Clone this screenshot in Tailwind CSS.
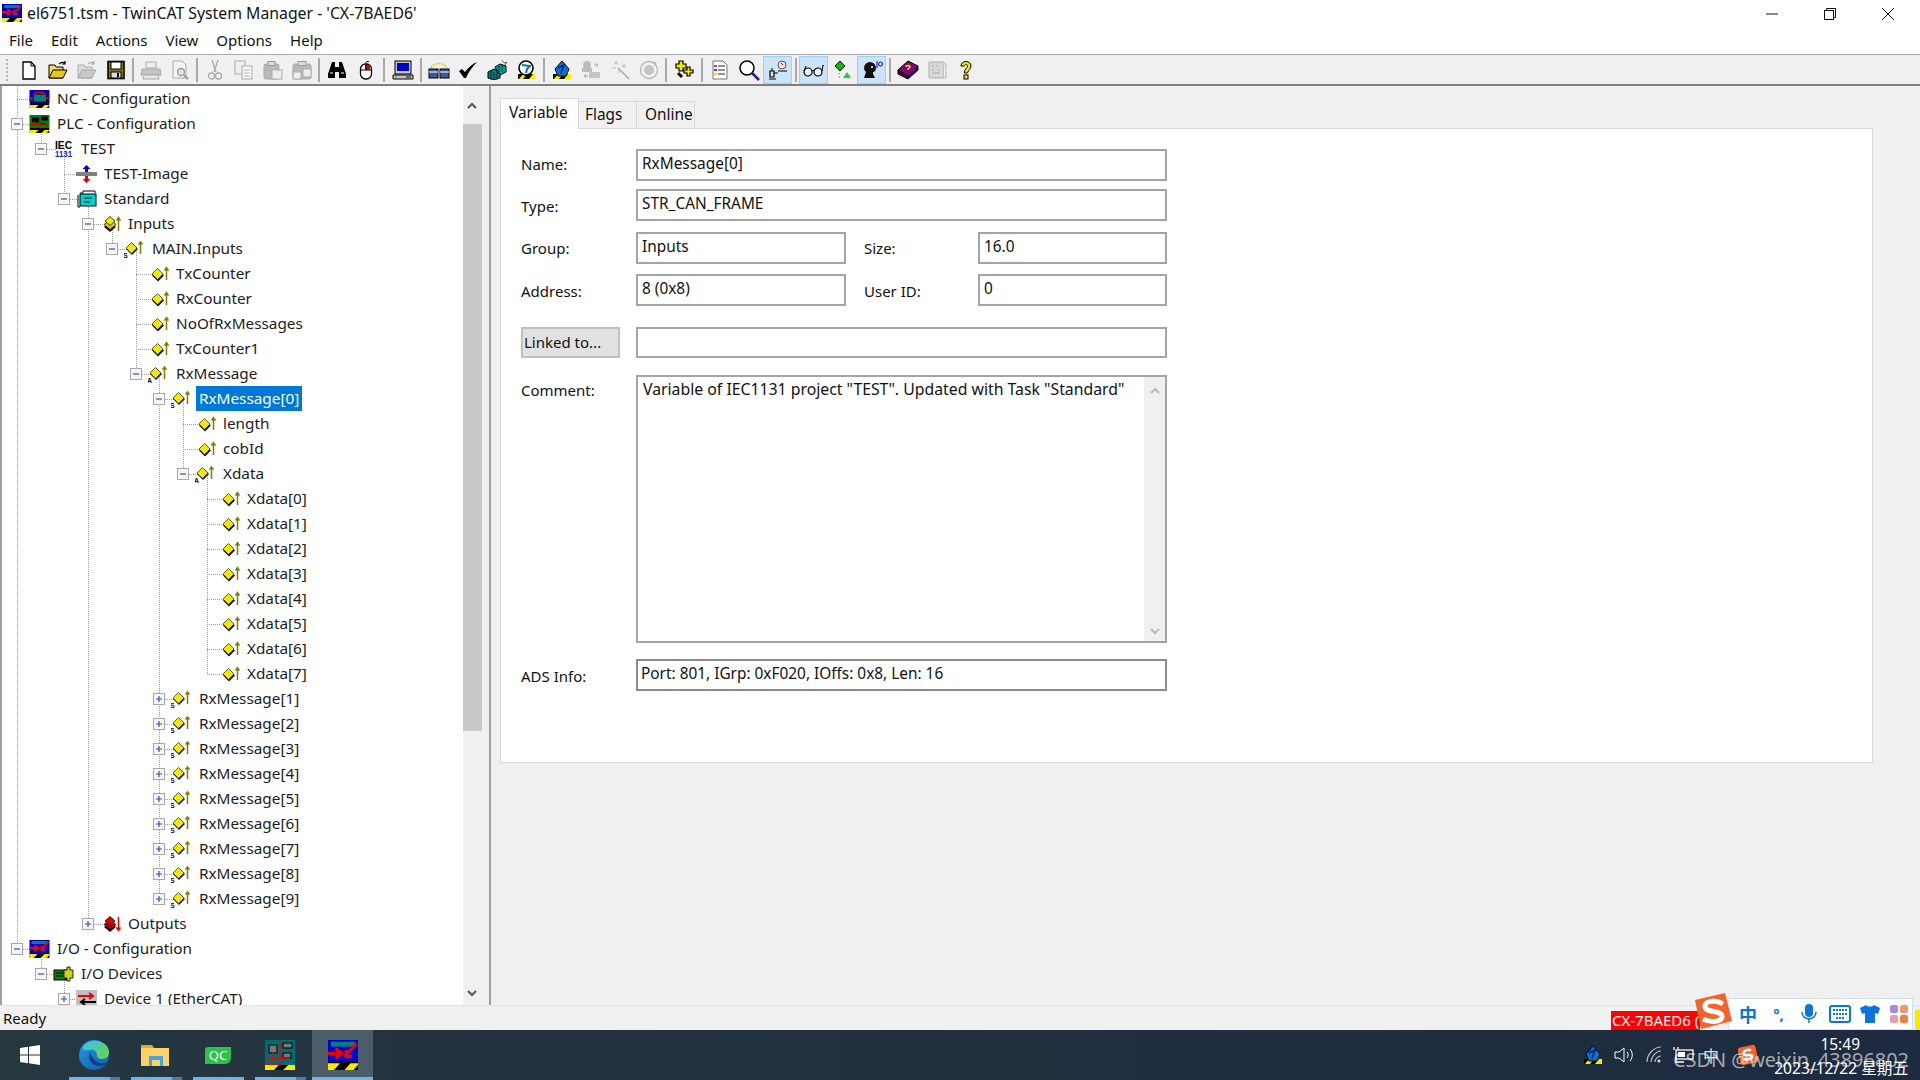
<!doctype html>
<html>
<head>
<meta charset="utf-8">
<title>TwinCAT System Manager</title>
<script src="https://cdn.jsdelivr.net/npm/@tailwindcss/browser@4"></script>
</head>
<body class="overflow-hidden">
<!-- shared icons -->
<svg class="hidden" width="0" height="0">
  <defs>
    <symbol id="minus" viewBox="0 0 12 12"><rect x=".5" y=".5" width="11" height="11" fill="#f6f6f6" stroke="#a8a8a8"/><path d="M3 6h6" stroke="#3b4fa8" stroke-width="1.2"/></symbol>
    <symbol id="plus" viewBox="0 0 12 12"><rect x=".5" y=".5" width="11" height="11" fill="#f6f6f6" stroke="#a8a8a8"/><path d="M3 6h6M6 3v6" stroke="#3b4fa8" stroke-width="1.2"/></symbol>
    <symbol id="var" viewBox="0 0 21 18"><path d="M4 10.500l6-6 6 6-6 6z" fill="#111"/><path d="M4 9l5.500-5.500L15 9l-5.500 5.500z" fill="#f4e800" stroke="#222" stroke-width=".7"/><path d="M18.500 15V3M16.500 5.500l2-3 2 3" fill="none" stroke="#808000" stroke-width="1.500"/></symbol>
    <symbol id="var-a" viewBox="0 0 21 18"><path d="M2 9l6-6 6 6-6 6z" fill="#111"/><path d="M2 8l5.500-5.500L13 8l-5.500 5.500z" fill="#f4e800" stroke="#222" stroke-width=".7"/><path d="M16.500 14V2M14.500 4.500l2-2.500 2 2.500" fill="none" stroke="#808000" stroke-width="1.500"/><text x="-1" y="18" font-size="7" font-weight="700" font-family="Liberation Sans" fill="#111">A</text></symbol>
    <symbol id="var-s" viewBox="0 0 21 18"><path d="M2 9l6-6 6 6-6 6z" fill="#111"/><path d="M2 8l5.500-5.500L13 8l-5.500 5.500z" fill="#f4e800" stroke="#222" stroke-width=".7"/><path d="M16.500 14V2M14.500 4.500l2-2.500 2 2.500" fill="none" stroke="#808000" stroke-width="1.500"/><text x="-1" y="18" font-size="7" font-weight="700" font-family="Liberation Sans" fill="#111">S</text></symbol>
    <symbol id="var-stack" viewBox="0 0 21 18"><g transform="translate(3 0)"><path d="M1 12l6-5 6 5-6 5z" fill="#111"/><path d="M1 9.500l6-5 6 5-6 5z" fill="#d8c800" stroke="#111" stroke-width=".8"/><path d="M2 6l5-4.500L12 6l-5 4.500z" fill="#f4e800" stroke="#111" stroke-width=".8"/><path d="M15.500 16V3M13.500 5.500l2-3 2 3" fill="none" stroke="#808000" stroke-width="1.500"/></g></symbol>
    <symbol id="out-stack" viewBox="0 0 21 18"><g transform="translate(3 0)"><path d="M1 12l6-5 6 5-6 5z" fill="#111"/><path d="M1 9.500l6-5 6 5-6 5z" fill="#b00000" stroke="#111" stroke-width=".8"/><path d="M2 6l5-4.500L12 6l-5 4.500z" fill="#e80000" stroke="#111" stroke-width=".8"/><path d="M15.500 2v13M13.500 12.500l2 3 2-3" fill="none" stroke="#e80000" stroke-width="1.500"/></g></symbol>
    <symbol id="strip" viewBox="0 0 20 5"><rect width="20" height="5" fill="#000"/><path d="M0 5V2h9l-3 3zM12 5l3-3h5l-3 3z" fill="#f7ea00"/></symbol>
    <symbol id="twincat-io" viewBox="0 0 20 18"><rect width="20" height="13" fill="#0000c8"/><rect x="2" y="1" width="16" height="3" fill="#008080"/><path d="M0 8h9M5 5l4 3-4 3" fill="none" stroke="#f00000" stroke-width="2"/><path d="M19 2l-8 8M12 6v4h4" fill="none" stroke="#f00000" stroke-width="2"/><rect y="13" width="20" height="5" fill="#000"/><path d="M0 18v-4h8l-4 4zM11 18l4-4h5v1l-3 3z" fill="#f7ea00"/></symbol>
    <symbol id="globe" viewBox="0 0 20 20"><rect x="1" y="14" width="18" height="5" fill="#000"/><path d="M2 19l4-5h5l-4 5zM12 19l4-5h3v5z" fill="#f7ea00"/><path d="M3 9l7-8 7 8-3 7H6z" fill="#0078d0" stroke="#000"/><path d="M6 8l6-3-2 5-1 4" fill="none" stroke="#101080" stroke-width="1.500"/></symbol>
    <symbol id="globe2" viewBox="0 0 20 20"><rect x="2" y="14" width="17" height="5" fill="#000"/><path d="M3 19l4-5h4l-4 5zM13 19l4-5h2v5z" fill="#f7ea00"/><circle cx="10" cy="8" r="7" fill="#fff" stroke="#000" stroke-width="1.600"/><path d="M6 5l8 1-3 3-1 4" fill="none" stroke="#008080" stroke-width="2"/></symbol>
  </defs>
</svg>

<div class="relative flex flex-col w-[1920px] h-[1080px] bg-white text-[#111] overflow-hidden font-['Noto_Sans','Open_Sans',sans-serif]">

  <!-- title bar -->
  <div class="flex items-center h-[28px] shrink-0 bg-white">
    <svg class="w-[20px] h-[20px] ml-[2px] mt-[-3px]" viewBox="0 0 20 20"><use href="#twincat-io"/></svg>
    <span class="ml-[5px] text-[15.8px] mt-[-1px] whitespace-nowrap">el6751.tsm - TwinCAT System Manager - 'CX-7BAED6'</span>
    <div class="ml-auto mr-[3px] flex items-center">
      <span class="flex justify-center w-[58px]"><svg class="w-[14px] h-[14px]" viewBox="0 0 14 14"><path d="M1 7h12" stroke="#111"/></svg></span>
      <span class="flex justify-center w-[58px]"><svg class="w-[14px] h-[14px]" viewBox="0 0 14 14"><path d="M3.500 3V1.500h9v9H11" fill="none" stroke="#111"/><rect x="1.500" y="3.500" width="9" height="9" fill="none" stroke="#111"/></svg></span>
      <span class="flex justify-center w-[58px]"><svg class="w-[14px] h-[14px]" viewBox="0 0 14 14"><path d="M1 1l12 12M13 1L1 13" stroke="#111"/></svg></span>
    </div>
  </div>

  <!-- menu bar -->
  <div class="flex items-center gap-[18px] h-[26px] shrink-0 pl-[9px] pb-[1px] text-[15px] bg-white">
    <span>File</span><span>Edit</span><span>Actions</span><span>View</span><span>Options</span><span>Help</span>
  </div>

  <!-- toolbar -->
  <div class="flex items-center h-[30px] shrink-0 bg-[#f0f0f0] border-t border-[#a8a8a8]">
    <div class="w-[14px] flex justify-center"><span class="h-[22px] border-l-2 border-dotted border-[#b5b5b5]"></span></div>
    <div class="w-[29px] h-[28px] flex items-center justify-center"><svg class="w-[20px] h-[20px]" viewBox="0 0 20 20"><path d="M4 2h8l4 4v13H4z" fill="#fff" stroke="#000" stroke-width="1.300"/><path d="M12 2v4h4" fill="none" stroke="#000"/></svg></div>
    <div class="w-[29px] h-[28px] flex items-center justify-center"><svg class="w-[20px] h-[20px]" viewBox="0 0 20 20"><path d="M1 5h6l1 2h7v11H1z" fill="#f0e060" stroke="#000"/><path d="M1 18l4-8h14l-4 8z" fill="#e8c820" stroke="#000"/><path d="M11 4c2-2 4-2 6-1M17 1v3h-3" fill="none" stroke="#000" stroke-width="1.200"/></svg></div>
    <div class="w-[29px] h-[28px] flex items-center justify-center"><svg class="w-[20px] h-[20px]" viewBox="0 0 20 20"><path d="M1 5h6l1 2h7v11H1z" fill="#dcdcdc" stroke="#aaa"/><path d="M1 18l4-8h14l-4 8z" fill="#c8c8c8" stroke="#aaa"/><path d="M11 4c2-2 4-2 6-1M17 1v3h-3" fill="none" stroke="#aaa" stroke-width="1.200"/></svg></div>
    <div class="w-[29px] h-[28px] flex items-center justify-center"><svg class="w-[20px] h-[20px]" viewBox="0 0 20 20"><rect x="2" y="1.500" width="16" height="17" fill="#807800" stroke="#000" stroke-width="1.600"/><rect x="5" y="2" width="10" height="7" fill="#fff" stroke="#000"/><rect x="5" y="12" width="10" height="6" fill="#ddd" stroke="#000"/><rect x="11" y="13" width="2" height="4" fill="#000"/></svg></div>
    <div class="w-[6px] flex justify-center"><span class="w-[2px] h-[24px] bg-[#a8a8a8]"></span></div>
    <div class="w-[29px] h-[28px] flex items-center justify-center"><svg class="w-[22px] h-[20px]" viewBox="0 0 22 20"><path d="M6 2h10v6H6z" fill="#eee" stroke="#aaa"/><path d="M2 9h18l1 6H1z" fill="#c4c4c4" stroke="#aaa"/><path d="M4 15h14l1 4H3z" fill="#e8e8e8" stroke="#aaa"/></svg></div>
    <div class="w-[29px] h-[28px] flex items-center justify-center"><svg class="w-[20px] h-[20px]" viewBox="0 0 20 20"><path d="M3 1h9l4 4v13H3z" fill="#f4f4f4" stroke="#aaa"/><circle cx="11" cy="12" r="3.500" fill="#e4e4e4" stroke="#999" stroke-width="1.300"/><path d="M14 15l4 4" stroke="#999" stroke-width="2"/></svg></div>
    <div class="w-[6px] flex justify-center"><span class="w-[2px] h-[24px] bg-[#a8a8a8]"></span></div>
    <div class="w-[29px] h-[28px] flex items-center justify-center"><svg class="w-[16px] h-[22px]" viewBox="0 0 16 22"><path d="M5 1l4 12M11 1L7 13" stroke="#aaa" stroke-width="1.300"/><circle cx="4.500" cy="17" r="3" fill="none" stroke="#aaa" stroke-width="1.300"/><circle cx="11.500" cy="17" r="3" fill="none" stroke="#aaa" stroke-width="1.300"/></svg></div>
    <div class="w-[29px] h-[28px] flex items-center justify-center"><svg class="w-[20px] h-[20px]" viewBox="0 0 20 20"><rect x="1" y="1" width="10" height="13" fill="#eee" stroke="#aaa"/><rect x="8" y="6" width="10" height="13" fill="#f6f6f6" stroke="#aaa"/><path d="M10 10h6M10 13h6M10 16h6" stroke="#bbb"/></svg></div>
    <div class="w-[29px] h-[28px] flex items-center justify-center"><svg class="w-[20px] h-[20px]" viewBox="0 0 20 20"><rect x="1" y="4" width="15" height="15" rx="2" fill="#b8b8b8" stroke="#aaa"/><rect x="5" y="1.500" width="7" height="4" fill="#ddd" stroke="#999"/><rect x="9" y="10" width="10" height="9" fill="#eee" stroke="#aaa"/></svg></div>
    <div class="w-[29px] h-[28px] flex items-center justify-center"><svg class="w-[20px] h-[20px]" viewBox="0 0 20 20"><rect x="1" y="4" width="18" height="15" rx="2" fill="#b8b8b8" stroke="#aaa"/><rect x="6" y="1.500" width="8" height="4" fill="#ddd" stroke="#999"/><rect x="1" y="12" width="8" height="7" fill="#eee" stroke="#aaa"/><rect x="11" y="9" width="8" height="8" fill="#eee" stroke="#aaa"/></svg></div>
    <div class="w-[6px] flex justify-center"><span class="w-[2px] h-[24px] bg-[#a8a8a8]"></span></div>
    <div class="w-[29px] h-[28px] flex items-center justify-center"><svg class="w-[20px] h-[18px]" viewBox="0 0 20 18"><path d="M5 1h3v5h4V1h3l4 12v4h-7v-6H8v6H1v-4z" fill="#000"/><path d="M3 12h3M14 12h3" stroke="#fff"/></svg></div>
    <div class="w-[29px] h-[28px] flex items-center justify-center"><svg class="w-[14px] h-[20px]" viewBox="0 0 14 20"><path d="M7 3c0-2 3-2 3-1" fill="none" stroke="#000"/><rect x="1.500" y="4" width="11" height="15" rx="5" fill="#fff" stroke="#000" stroke-width="1.300"/><rect x="6" y="5" width="5" height="5" fill="#e00000"/><path d="M2 10h10M7 4v6" stroke="#000"/></svg></div>
    <div class="w-[8px] flex justify-center"><span class="w-[2px] h-[24px] bg-[#a8a8a8]"></span></div>
    <div class="w-[29px] h-[28px] flex items-center justify-center"><svg class="w-[22px] h-[20px]" viewBox="0 0 22 20"><rect x="3" y="1" width="16" height="13" fill="#c8c8c8" stroke="#000"/><rect x="5" y="3" width="12" height="8" fill="#0000d0"/><path d="M1 15h20v4H1z" fill="#c8c8c8" stroke="#000"/><path d="M14 17h5" stroke="#000"/><rect x="3" y="16.500" width="2" height="1" fill="#00c000"/></svg></div>
    <div class="w-[7px] flex justify-center"><span class="w-[2px] h-[24px] bg-[#a8a8a8]"></span></div>
    <div class="w-[29px] h-[28px] flex items-center justify-center"><svg class="w-[22px] h-[20px]" viewBox="0 0 22 20"><path d="M3 8c4-6 12-6 16 0" fill="none" stroke="#e0c800" stroke-width="1.500" stroke-dasharray="2 1"/><rect x="1" y="9" width="9" height="9" fill="#3c5a98" stroke="#000"/><rect x="12" y="9" width="9" height="9" fill="#3c5a98" stroke="#000"/><path d="M1 12h9M12 12h9" stroke="#c8c8c8" stroke-width="1.500"/></svg></div>
    <div class="w-[29px] h-[28px] flex items-center justify-center"><svg class="w-[20px] h-[20px]" viewBox="0 0 20 20"><path d="M1 11l3-2 3 3C10 8 14 4 19 2c-4 4-8 9-11 16H6z" fill="#000"/></svg></div>
    <div class="w-[29px] h-[28px] flex items-center justify-center"><svg class="w-[20px] h-[20px]" viewBox="0 0 20 20"><path d="M1 12l6-3 6 3v6l-6 2-6-2z" fill="#008080" stroke="#000"/><path d="M8 7l5-3 6 2v6l-6 3z" fill="#00a0a0" stroke="#000"/><path d="M4 11v7M7 12v7M10 11v7M12 6v7M15 5v7" stroke="#000" stroke-width=".7"/><path d="M15 0l2 3 3-1-2 3" fill="#f0e000" stroke="#000" stroke-width=".5"/></svg></div>
    <div class="w-[29px] h-[28px] flex items-center justify-center"><svg class="w-[20px] h-[20px]" viewBox="0 0 20 20"><use href="#globe2"/></svg></div>
    <div class="w-[7px] flex justify-center"><span class="w-[2px] h-[24px] bg-[#a8a8a8]"></span></div>
    <div class="w-[29px] h-[28px] flex items-center justify-center"><svg class="w-[20px] h-[20px]" viewBox="0 0 20 20"><use href="#globe"/></svg></div>
    <div class="w-[29px] h-[28px] flex items-center justify-center"><svg class="w-[20px] h-[20px]" viewBox="0 0 20 20"><circle cx="6" cy="5" r="4" fill="#bbb"/><rect x="1" y="8" width="10" height="4" fill="#bbb"/><rect x="8" y="12" width="11" height="6" rx="1" fill="#c4c4c4"/><path d="M13 5h4M15 3l2 2-2 2M3 16h4M5 14l-2 2 2 2" fill="none" stroke="#aaa"/></svg></div>
    <div class="w-[29px] h-[28px] flex items-center justify-center"><svg class="w-[20px] h-[20px]" viewBox="0 0 20 20"><path d="M8 8l11 11" stroke="#aaa" stroke-width="1.600"/><path d="M6 1v4M4 3h4M2 8h4M14 4v4M12 6h4M9 10v3" stroke="#bbb"/></svg></div>
    <div class="w-[29px] h-[28px] flex items-center justify-center"><svg class="w-[20px] h-[20px]" viewBox="0 0 20 20"><circle cx="10" cy="10" r="8.500" fill="none" stroke="#bbb" stroke-width="1.400"/><circle cx="10" cy="10" r="5" fill="#c4c4c4"/><path d="M14 2l3 1-1 3" fill="none" stroke="#aaa"/></svg></div>
    <div class="w-[6px] flex justify-center"><span class="w-[2px] h-[24px] bg-[#a8a8a8]"></span></div>
    <div class="w-[29px] h-[28px] flex items-center justify-center"><svg class="w-[20px] h-[20px]" viewBox="0 0 20 20"><path d="M5 1h4v3h3v4H9v3H5V8H2V4h3z" fill="#f4e800" stroke="#000" stroke-width="1.200"/><path d="M13 7h3v3h3v3h-3v3h-3v-3h-3v-3h3z" fill="#f4e800" stroke="#000" stroke-width="1.200"/><path d="M5 12l4 4-2 2-4-4z" fill="#000"/></svg></div>
    <div class="w-[7px] flex justify-center"><span class="w-[2px] h-[24px] bg-[#a8a8a8]"></span></div>
    <div class="w-[29px] h-[28px] flex items-center justify-center"><svg class="w-[18px] h-[20px]" viewBox="0 0 18 20"><path d="M2 1h10l4 4v14H2z" fill="#fff" stroke="#777"/><path d="M3 6h3" stroke="#d00000" stroke-width="1.500"/><path d="M3 10h3" stroke="#0000d0" stroke-width="1.500"/><path d="M3 14h3" stroke="#d8c000" stroke-width="1.500"/><path d="M7 6h7M7 10h7M7 14h7" stroke="#222"/></svg></div>
    <div class="w-[29px] h-[28px] flex items-center justify-center"><svg class="w-[22px] h-[22px]" viewBox="0 0 22 22"><circle cx="9" cy="9" r="7" fill="#fff" stroke="#000" stroke-width="1.500"/><path d="M14 14l7 7" stroke="#202090" stroke-width="2.500"/></svg></div>
    <div class="w-[29px] h-[28px] flex items-center justify-center bg-[#cce4f7] border border-[#99d1ff]"><svg class="w-[22px] h-[20px]" viewBox="0 0 22 20"><circle cx="15" cy="5" r="4" fill="#e8e8e8" stroke="#555"/><path d="M14 3l2 2" stroke="#c00"/><path d="M3 11h4v6H3zM7 13h4M11 11h9" fill="none" stroke="#000" stroke-width="1.200"/><path d="M2 19h7M5 8v3" stroke="#000"/></svg></div>
    <div class="w-[7px] flex justify-center"><span class="w-[2px] h-[24px] bg-[#a8a8a8]"></span></div>
    <div class="w-[29px] h-[28px] flex items-center justify-center bg-[#cce4f7] border border-[#99d1ff]"><svg class="w-[22px] h-[16px]" viewBox="0 0 22 16"><circle cx="5" cy="10" r="4" fill="#e8f4ff" stroke="#000" stroke-width="1.200"/><circle cx="15" cy="10" r="4" fill="#e8f4ff" stroke="#000" stroke-width="1.200"/><path d="M9 9c1-1 1-1 2 0M1 9l2-5M19 9l1-6 1 1" fill="none" stroke="#000"/></svg></div>
    <div class="w-[29px] h-[28px] flex items-center justify-center"><svg class="w-[20px] h-[20px]" viewBox="0 0 20 20"><path d="M2 6l5-5 5 5-5 5z" fill="#00c000" stroke="#000"/><path d="M10 18l4-6 4 6z" fill="#20d040"/><path d="M6 13v2M6 17h2" stroke="#555" stroke-dasharray="1 1"/></svg></div>
    <div class="w-[29px] h-[28px] flex items-center justify-center bg-[#cce4f7] border border-[#99d1ff]"><svg class="w-[22px] h-[20px]" viewBox="0 0 22 20"><path d="M3 8a6 6 0 0 1 12 0c0 3-2 4-3 4v2l2 4H3l2-6C4 11 3 10 3 8z" fill="#111"/><circle cx="11" cy="7" r="1" fill="#fff"/><path d="M16 1v7" stroke="#0000e0"/><circle cx="19.500" cy="4" r="2" fill="none" stroke="#0000e0"/></svg></div>
    <div class="w-[7px] flex justify-center"><span class="w-[2px] h-[24px] bg-[#a8a8a8]"></span></div>
    <div class="w-[29px] h-[28px] flex items-center justify-center"><svg class="w-[22px] h-[20px]" viewBox="0 0 22 20"><path d="M1 10l10-9 10 5-10 10z" fill="#800080" stroke="#000"/><path d="M1 10v4l10 5 10-9V6L11 16z" fill="#400040" stroke="#000"/><path d="M9 7c0-2 4-2 4 0 0 1-2 1-2 3" fill="none" stroke="#f0e000" stroke-width="1.500"/></svg></div>
    <div class="w-[29px] h-[28px] flex items-center justify-center"><svg class="w-[20px] h-[20px]" viewBox="0 0 20 20"><rect x="2" y="2" width="15" height="16" rx="1" fill="#d8d8d8" stroke="#aaa"/><path d="M5 5l2 2M9 5l2 2M5 9l2 2M11 9l2 2M5 13h8" stroke="#aaa"/><path d="M17 4h2v14h-2" fill="#eee" stroke="#bbb"/></svg></div>
    <div class="w-[29px] h-[28px] flex items-center justify-center"><svg class="w-[14px] h-[20px]" viewBox="0 0 14 20"><path d="M2 6c0-6 10-6 10 0 0 3-3 4-3.500 7h-3C5 9 8.500 8 8.500 6c0-2-3-2-3 0z" fill="#f4e800" stroke="#000"/><rect x="5" y="15" width="4" height="4" fill="#f4e800" stroke="#000"/></svg></div>
  </div>

  <!-- main area -->
  <div class="flex flex-1 min-h-0 border-t-2 border-[#808080] bg-[#f0f0f0]">

    <!-- tree with its scrollbar -->
    <div class="flex shrink-0 w-[482px]">
      <div class="w-[2px] bg-[#a0a0a0]"></div>
      <div class="relative w-[461px] bg-white overflow-hidden text-[15.3px] text-[#1c1c1c]">
        <svg class="absolute left-0 top-0" width="461" height="930" fill="none" stroke="#9c9c9c" stroke-dasharray="1 1">
          <path d="M15.500 0V863M39.500 38V63M39.500 863V888M62.500 63V113M62.500 888V925M86.500 113V838M110.500 138V163M134.500 163V288M157.500 288V813M181.500 313V388M205.500 388V588"/>
          <path d="M15 13.500h15M15 38.500h15M39 63.500h15M62 88.500h15M62 113.500h15M86 138.500h15M110 163.500h15M134 188.500h15M134 213.500h15M134 238.500h15M134 263.500h15M134 288.500h15M157 313.500h15M181 338.500h15M181 363.500h15M181 388.500h15M205 413.500h15M205 438.500h15M205 463.500h15M205 488.500h15M205 513.500h15M205 538.500h15M205 563.500h15M205 588.500h15M157 613.500h15M157 638.500h15M157 663.500h15M157 688.500h15M157 713.500h15M157 738.500h15M157 763.500h15M157 788.500h15M157 813.500h15M86 838.500h15M15 863.500h15M39 888.500h15M62 913.500h15"/>
        </svg>
        <div class="relative">
          <div class="flex items-center h-[25px] pl-[9px]"><span class="w-[12px] shrink-0"></span><svg class="w-[21px] h-[18px] ml-[6px]" viewBox="0 0 20 18"><rect width="20" height="13" fill="#0000c8"/><rect x="4" y="4" width="13" height="8" fill="#008080" stroke="#000"/><path d="M4 5c2-4 9-4 12 0" fill="none" stroke="#e00000" stroke-width="1.500"/><path d="M0 8h4M16 8h4" stroke="#e00000" stroke-width="2"/><use href="#strip" y="13" width="20" height="5"/></svg><span class="ml-[7px]">NC - Configuration</span></div>
          <div class="flex items-center h-[25px] pl-[9px]"><svg class="w-[12px] h-[12px] shrink-0"><use href="#minus"/></svg><svg class="w-[21px] h-[18px] ml-[6px]" viewBox="0 0 20 18"><rect width="20" height="13" fill="#008000"/><path d="M3 3h6v4h-6zM12 2h6v3h-6zM9 9h8" fill="#000" stroke="#000"/><path d="M1 10h18M10 2v9M5 6v5" stroke="#e00000" stroke-width="1.300"/><use href="#strip" y="13" width="20" height="5"/></svg><span class="ml-[7px]">PLC - Configuration</span></div>
          <div class="flex items-center h-[25px] pl-[33px]"><svg class="w-[12px] h-[12px] shrink-0"><use href="#minus"/></svg><svg class="w-[21px] h-[18px] ml-[6px]" viewBox="0 0 21 18"><text x="2" y="9" font-size="10.500" font-weight="700" font-family="Liberation Sans" textLength="17" lengthAdjust="spacingAndGlyphs" fill="#000">IEC</text><text x="2" y="17" font-size="9" font-weight="700" font-family="Liberation Sans" textLength="17" lengthAdjust="spacingAndGlyphs" fill="#1020d8">1131</text></svg><span class="ml-[7px]">TEST</span></div>
          <div class="flex items-center h-[25px] pl-[56px]"><span class="w-[12px] shrink-0"></span><svg class="w-[21px] h-[18px] ml-[6px]" viewBox="0 0 21 18"><rect y="7" width="21" height="4" fill="#808080"/><path d="M10.500 0l4 4h-2.500v3h-3V4H6.500z" fill="#0000e0"/><path d="M10.500 18l4-4h-2.500v-3h-3v3H6.500z" fill="#e00000"/></svg><span class="ml-[7px]">TEST-Image</span></div>
          <div class="flex items-center h-[25px] pl-[56px]"><svg class="w-[12px] h-[12px] shrink-0"><use href="#minus"/></svg><svg class="w-[21px] h-[18px] ml-[6px]" viewBox="0 0 21 18"><path d="M4 3h3V1h12v2" fill="none" stroke="#000"/><rect x="4" y="4" width="16" height="12" fill="#00d0d0" stroke="#000"/><path d="M4 17H2V5" fill="none" stroke="#000"/><path d="M8 8h8M8 12h6" stroke="#000"/></svg><span class="ml-[7px]">Standard</span></div>
          <div class="flex items-center h-[25px] pl-[80px]"><svg class="w-[12px] h-[12px] shrink-0"><use href="#minus"/></svg><svg class="w-[21px] h-[18px] ml-[6px]"><use href="#var-stack"/></svg><span class="ml-[7px]">Inputs</span></div>
          <div class="flex items-center h-[25px] pl-[104px]"><svg class="w-[12px] h-[12px] shrink-0"><use href="#minus"/></svg><svg class="w-[21px] h-[18px] ml-[6px]"><use href="#var-s"/></svg><span class="ml-[7px]">MAIN.Inputs</span></div>
          <div class="flex items-center h-[25px] pl-[128px]"><span class="w-[12px] shrink-0"></span><svg class="w-[21px] h-[18px] ml-[6px]"><use href="#var"/></svg><span class="ml-[7px]">TxCounter</span></div>
          <div class="flex items-center h-[25px] pl-[128px]"><span class="w-[12px] shrink-0"></span><svg class="w-[21px] h-[18px] ml-[6px]"><use href="#var"/></svg><span class="ml-[7px]">RxCounter</span></div>
          <div class="flex items-center h-[25px] pl-[128px]"><span class="w-[12px] shrink-0"></span><svg class="w-[21px] h-[18px] ml-[6px]"><use href="#var"/></svg><span class="ml-[7px]">NoOfRxMessages</span></div>
          <div class="flex items-center h-[25px] pl-[128px]"><span class="w-[12px] shrink-0"></span><svg class="w-[21px] h-[18px] ml-[6px]"><use href="#var"/></svg><span class="ml-[7px]">TxCounter1</span></div>
          <div class="flex items-center h-[25px] pl-[128px]"><svg class="w-[12px] h-[12px] shrink-0"><use href="#minus"/></svg><svg class="w-[21px] h-[18px] ml-[6px]"><use href="#var-a"/></svg><span class="ml-[7px]">RxMessage</span></div>
          <div class="flex items-center h-[25px] pl-[151px]"><svg class="w-[12px] h-[12px] shrink-0"><use href="#minus"/></svg><svg class="w-[21px] h-[18px] ml-[6px]"><use href="#var-s"/></svg><span class="ml-[4px] px-[3px] h-[25px] flex items-center bg-[#0078d7] text-white">RxMessage[0]</span></div>
          <div class="flex items-center h-[25px] pl-[175px]"><span class="w-[12px] shrink-0"></span><svg class="w-[21px] h-[18px] ml-[6px]"><use href="#var"/></svg><span class="ml-[7px]">length</span></div>
          <div class="flex items-center h-[25px] pl-[175px]"><span class="w-[12px] shrink-0"></span><svg class="w-[21px] h-[18px] ml-[6px]"><use href="#var"/></svg><span class="ml-[7px]">cobId</span></div>
          <div class="flex items-center h-[25px] pl-[175px]"><svg class="w-[12px] h-[12px] shrink-0"><use href="#minus"/></svg><svg class="w-[21px] h-[18px] ml-[6px]"><use href="#var-a"/></svg><span class="ml-[7px]">Xdata</span></div>
          <div class="flex items-center h-[25px] pl-[199px]"><span class="w-[12px] shrink-0"></span><svg class="w-[21px] h-[18px] ml-[6px]"><use href="#var"/></svg><span class="ml-[7px]">Xdata[0]</span></div>
          <div class="flex items-center h-[25px] pl-[199px]"><span class="w-[12px] shrink-0"></span><svg class="w-[21px] h-[18px] ml-[6px]"><use href="#var"/></svg><span class="ml-[7px]">Xdata[1]</span></div>
          <div class="flex items-center h-[25px] pl-[199px]"><span class="w-[12px] shrink-0"></span><svg class="w-[21px] h-[18px] ml-[6px]"><use href="#var"/></svg><span class="ml-[7px]">Xdata[2]</span></div>
          <div class="flex items-center h-[25px] pl-[199px]"><span class="w-[12px] shrink-0"></span><svg class="w-[21px] h-[18px] ml-[6px]"><use href="#var"/></svg><span class="ml-[7px]">Xdata[3]</span></div>
          <div class="flex items-center h-[25px] pl-[199px]"><span class="w-[12px] shrink-0"></span><svg class="w-[21px] h-[18px] ml-[6px]"><use href="#var"/></svg><span class="ml-[7px]">Xdata[4]</span></div>
          <div class="flex items-center h-[25px] pl-[199px]"><span class="w-[12px] shrink-0"></span><svg class="w-[21px] h-[18px] ml-[6px]"><use href="#var"/></svg><span class="ml-[7px]">Xdata[5]</span></div>
          <div class="flex items-center h-[25px] pl-[199px]"><span class="w-[12px] shrink-0"></span><svg class="w-[21px] h-[18px] ml-[6px]"><use href="#var"/></svg><span class="ml-[7px]">Xdata[6]</span></div>
          <div class="flex items-center h-[25px] pl-[199px]"><span class="w-[12px] shrink-0"></span><svg class="w-[21px] h-[18px] ml-[6px]"><use href="#var"/></svg><span class="ml-[7px]">Xdata[7]</span></div>
          <div class="flex items-center h-[25px] pl-[151px]"><svg class="w-[12px] h-[12px] shrink-0"><use href="#plus"/></svg><svg class="w-[21px] h-[18px] ml-[6px]"><use href="#var-s"/></svg><span class="ml-[7px]">RxMessage[1]</span></div>
          <div class="flex items-center h-[25px] pl-[151px]"><svg class="w-[12px] h-[12px] shrink-0"><use href="#plus"/></svg><svg class="w-[21px] h-[18px] ml-[6px]"><use href="#var-s"/></svg><span class="ml-[7px]">RxMessage[2]</span></div>
          <div class="flex items-center h-[25px] pl-[151px]"><svg class="w-[12px] h-[12px] shrink-0"><use href="#plus"/></svg><svg class="w-[21px] h-[18px] ml-[6px]"><use href="#var-s"/></svg><span class="ml-[7px]">RxMessage[3]</span></div>
          <div class="flex items-center h-[25px] pl-[151px]"><svg class="w-[12px] h-[12px] shrink-0"><use href="#plus"/></svg><svg class="w-[21px] h-[18px] ml-[6px]"><use href="#var-s"/></svg><span class="ml-[7px]">RxMessage[4]</span></div>
          <div class="flex items-center h-[25px] pl-[151px]"><svg class="w-[12px] h-[12px] shrink-0"><use href="#plus"/></svg><svg class="w-[21px] h-[18px] ml-[6px]"><use href="#var-s"/></svg><span class="ml-[7px]">RxMessage[5]</span></div>
          <div class="flex items-center h-[25px] pl-[151px]"><svg class="w-[12px] h-[12px] shrink-0"><use href="#plus"/></svg><svg class="w-[21px] h-[18px] ml-[6px]"><use href="#var-s"/></svg><span class="ml-[7px]">RxMessage[6]</span></div>
          <div class="flex items-center h-[25px] pl-[151px]"><svg class="w-[12px] h-[12px] shrink-0"><use href="#plus"/></svg><svg class="w-[21px] h-[18px] ml-[6px]"><use href="#var-s"/></svg><span class="ml-[7px]">RxMessage[7]</span></div>
          <div class="flex items-center h-[25px] pl-[151px]"><svg class="w-[12px] h-[12px] shrink-0"><use href="#plus"/></svg><svg class="w-[21px] h-[18px] ml-[6px]"><use href="#var-s"/></svg><span class="ml-[7px]">RxMessage[8]</span></div>
          <div class="flex items-center h-[25px] pl-[151px]"><svg class="w-[12px] h-[12px] shrink-0"><use href="#plus"/></svg><svg class="w-[21px] h-[18px] ml-[6px]"><use href="#var-s"/></svg><span class="ml-[7px]">RxMessage[9]</span></div>
          <div class="flex items-center h-[25px] pl-[80px]"><svg class="w-[12px] h-[12px] shrink-0"><use href="#plus"/></svg><svg class="w-[21px] h-[18px] ml-[6px]"><use href="#out-stack"/></svg><span class="ml-[7px]">Outputs</span></div>
          <div class="flex items-center h-[25px] pl-[9px]"><svg class="w-[12px] h-[12px] shrink-0"><use href="#minus"/></svg><svg class="w-[21px] h-[18px] ml-[6px]"><use href="#twincat-io"/></svg><span class="ml-[7px]">I/O - Configuration</span></div>
          <div class="flex items-center h-[25px] pl-[33px]"><svg class="w-[12px] h-[12px] shrink-0"><use href="#minus"/></svg><svg class="w-[21px] h-[18px] ml-[6px]" viewBox="0 0 21 18"><rect x="1" y="5" width="13" height="10" fill="#108010" stroke="#000"/><path d="M3 8h7M3 11h7" stroke="#000"/><path d="M11 5h3V2h3v3h3v8h-3v3h-3v-3h-3z" fill="#d0d020" stroke="#000" stroke-width=".8"/></svg><span class="ml-[7px]">I/O Devices</span></div>
          <div class="flex items-center h-[25px] pl-[56px]"><svg class="w-[12px] h-[12px] shrink-0"><use href="#plus"/></svg><svg class="w-[21px] h-[18px] ml-[6px]" viewBox="0 0 21 18"><rect width="21" height="18" fill="#c0c0c0"/><path d="M2 6h14M13 3l4 3-4 3" fill="none" stroke="#f00000" stroke-width="2"/><path d="M20 12H6M9 9l-4 3 4 3" fill="none" stroke="#000" stroke-width="2"/></svg><span class="ml-[7px]">Device 1 (EtherCAT)</span></div>
        </div>
      </div>
      <div class="flex flex-col items-center w-[19px] bg-[#f0f0f0]">
        <div class="flex items-center justify-center h-[38px] shrink-0 w-full pr-[2px]"><svg class="w-[10px] h-[7px]" viewBox="0 0 10 7"><path d="M1 6l4-4 4 4" fill="none" stroke="#555" stroke-width="2"/></svg></div>
        <div class="h-[607px] shrink-0 w-full bg-[#c8c8c8]"></div>
        <div class="flex-1"></div>
        <div class="flex items-center justify-center h-[23px] shrink-0 w-full pr-[2px]"><svg class="w-[10px] h-[7px]" viewBox="0 0 10 7"><path d="M1 1l4 4 4-4" fill="none" stroke="#555" stroke-width="2"/></svg></div>
      </div>
    </div>

    <!-- splitter -->
    <div class="w-[7px] shrink-0"></div>

    <!-- properties panel -->
    <div class="flex-1 border-l-2 border-[#a0a0a0] pl-[9px] pr-[47px] pt-[12px]">
      <div class="relative flex items-end h-[30px] text-[15.4px]">
        <span class="flex items-center relative z-10 h-[31px] mb-[-1px] w-[79px] pl-[8px] pb-[3px] bg-white border border-b-0 border-[#d9d9d9]">Variable</span>
        <span class="flex items-center h-[27px] w-[58px] pl-[6px] pb-[1px] border-r border-t border-[#d9d9d9]">Flags</span>
        <span class="flex items-center h-[27px] w-[58px] pl-[8px] pb-[1px] border-r border-t border-[#d9d9d9]">Online</span>
      </div>
      <div class="h-[635px] bg-white border border-[#d9d9d9] text-[15.4px] pl-[20px]">
        <div class="flex items-center mt-[20px] h-[32px]"><span class="w-[115px] pb-[2px] text-[15px]">Name:</span><div class="flex items-center w-[531px] h-[32px] pl-[4px] pb-[3px] border-2 border-[#a4a4a4]">RxMessage[0]</div></div>
        <div class="flex items-center mt-[8px] h-[32px]"><span class="w-[115px] pt-[2px] text-[15px]">Type:</span><div class="flex items-center w-[531px] h-[32px] pl-[4px] pb-[3px] border-2 border-[#a4a4a4]">STR_CAN_FRAME</div></div>
        <div class="flex items-center mt-[11px] h-[32px]"><span class="w-[115px] text-[15px]">Group:</span><div class="flex items-center w-[210px] h-[32px] pl-[4px] pb-[3px] border-2 border-[#a4a4a4]">Inputs</div><span class="w-[132px] pl-[18px] text-[15px]">Size:</span><div class="flex items-center w-[189px] h-[32px] pl-[4px] pb-[3px] border-2 border-[#a4a4a4]">16.0</div></div>
        <div class="flex items-center mt-[10px] h-[32px]"><span class="w-[115px] pt-[2px] text-[15px]">Address:</span><div class="flex items-center w-[210px] h-[32px] pl-[4px] pb-[3px] border-2 border-[#a4a4a4]">8 (0x8)</div><span class="w-[132px] pl-[18px] pt-[2px] text-[15px]">User ID:</span><div class="flex items-center w-[189px] h-[32px] pl-[4px] pb-[3px] border-2 border-[#a4a4a4]">0</div></div>
        <div class="flex items-center mt-[21px] h-[31px]"><div class="w-[115px]"><span class="flex items-center w-[99px] h-[31px] pl-[1px] text-[15px] bg-[#e1e1e1] border-2 border-[#c0c0c0]">Linked to...</span></div><div class="w-[531px] h-[31px] border-2 border-[#a4a4a4]"></div></div>
        <div class="flex mt-[17px] h-[268px]"><span class="w-[115px] pt-[4px] text-[15px]">Comment:</span>
          <div class="flex w-[531px] h-[268px] border-2 border-[#a4a4a4]">
            <p class="flex-1 pl-[5px] pt-[1px] whitespace-nowrap text-[15.8px]">Variable of IEC1131 project "TEST". Updated with Task "Standard"</p>
            <div class="flex flex-col items-center justify-between w-[21px] bg-[#f0f0f0] pt-[10px] pb-[6px]">
              <svg class="w-[10px] h-[7px]" viewBox="0 0 10 7"><path d="M1 6l4-4 4 4" fill="none" stroke="#b8b8b8" stroke-width="2"/></svg>
              <svg class="w-[10px] h-[7px]" viewBox="0 0 10 7"><path d="M1 1l4 4 4-4" fill="none" stroke="#b8b8b8" stroke-width="2"/></svg>
            </div>
          </div>
        </div>
        <div class="flex items-center mt-[16px] h-[32px]"><span class="w-[115px] pt-[2px] text-[15px]">ADS Info:</span><div class="flex items-center w-[531px] h-[32px] pl-[3px] pb-[3px] border-2 border-[#8c8c8c]">Port: 801, IGrp: 0xF020, IOffs: 0x8, Len: 16</div></div>
      </div>
    </div>
  </div>

  <!-- status bar -->
  <div class="flex items-center h-[25px] shrink-0 bg-[#f0f0f0] border-t border-[#e4e4e4] text-[15px]">
    <span class="pl-[3px]">Ready</span>
    <span class="ml-auto mr-[220px] mt-[5px] flex items-center h-[19px] w-[89px] pl-[1px] bg-[#ff0000] text-white whitespace-nowrap overflow-hidden">CX-7BAED6 (</span>
    <span class="absolute right-0 bottom-[50px] w-[5px] h-[20px] bg-[#f7ea00]"></span>
  </div>

  <!-- taskbar -->
  <div class="flex items-center h-[50px] shrink-0 bg-gradient-to-r from-[#25373f] to-[#1d2a40] text-white">
    <div class="flex items-center justify-center w-[64px] h-[50px] pr-[4px]"><svg class="w-[20px] h-[20px]" viewBox="0 0 20 20" fill="#fff"><path d="M0 3l8-1.200V9.500H0zM9 1.700L20 0v9.500H9zM0 10.500h8v7.700l-8-1.200zM9 10.500h11V20L9 18.300z"/></svg></div>
    <div class="relative flex items-center justify-center w-[62px] h-[50px]"><svg class="w-[32px] h-[32px]" viewBox="0 0 32 32"><defs><linearGradient id="edge-a" x1="0" y1="0" x2="1" y2="1"><stop offset="0" stop-color="#1b9de2"/><stop offset="1" stop-color="#1558b0"/></linearGradient><linearGradient id="edge-b" x1="0" y1="0" x2="1" y2="1"><stop offset="0" stop-color="#35c1f1"/><stop offset="1" stop-color="#6fd53f"/></linearGradient></defs><circle cx="15" cy="16" r="15" fill="url(#edge-a)"/><path d="M3 9C7 1 20-1 27 6c4 4 4 11 0 13-4 2-10 1-9-3 0-3-3-6-7-5-4 0-6 1-8-2z" fill="url(#edge-b)"/><path d="M11 13c-3 5 1 14 9 14 3 0 6-1 8-4-5 3-13 2-17-10z" fill="#0b3f8a"/></svg><span class="absolute bottom-0 left-[5px] w-[41px] h-[3px] bg-[#6fb3e8]"></span><span class="absolute bottom-0 left-[46px] w-[10px] h-[3px] bg-[#4a7ea8]"></span></div>
    <div class="relative flex items-center justify-center w-[62px] h-[50px] pr-[4px]"><svg class="w-[30px] h-[24px]" viewBox="0 0 30 24"><path d="M1 2h11l2 3h15v18H1z" fill="#e8a52c"/><rect x="1" y="5" width="28" height="18" fill="#fcd265"/><rect x="9" y="13" width="14" height="10" fill="#4aa3e0"/><rect x="12" y="17" width="8" height="6" fill="#fcd265"/></svg><span class="absolute bottom-0 left-[5px] w-[41px] h-[3px] bg-[#6fb3e8]"></span><span class="absolute bottom-0 left-[46px] w-[10px] h-[3px] bg-[#4a7ea8]"></span></div>
    <div class="relative flex items-center justify-center w-[62px] h-[50px] pr-[2px]"><span class="flex items-center justify-center w-[26px] h-[17px] rounded-tl-[3px] rounded-br-[6px] bg-[#2fc04a] text-[13px] leading-none">QC</span><span class="absolute bottom-0 left-[5px] w-[51px] h-[3px] bg-[#6fb3e8]"></span></div>
    <div class="relative flex items-center justify-center w-[62px] h-[50px] pr-[2px]"><svg class="w-[30px] h-[30px]" viewBox="0 0 30 30"><rect width="30" height="30" fill="#006c70"/><rect x="4" y="5" width="8" height="8" fill="#777" stroke="#000"/><rect x="18" y="3" width="9" height="5" fill="#777" stroke="#000"/><rect x="18" y="13" width="8" height="5" fill="#777" stroke="#000"/><path d="M15 1v20M3 18h22M8 13v8M1 24h18" stroke="#f00000" stroke-width="1.500"/><path d="M0 30v-5h14l-5 5zM18 30l5-5h7v5z" fill="#f7ea00"/><path d="M9 30l5-5h9l-5 5z" fill="#000"/></svg><span class="absolute bottom-0 left-[5px] w-[41px] h-[3px] bg-[#6fb3e8]"></span><span class="absolute bottom-0 left-[46px] w-[10px] h-[3px] bg-[#4a7ea8]"></span></div>
    <div class="relative flex items-center justify-center w-[61px] h-[50px] bg-[#4c5e67]"><svg class="w-[30px] h-[30px]" viewBox="0 0 20 18" preserveAspectRatio="none"><use href="#twincat-io"/></svg><span class="absolute bottom-0 left-0 w-full h-[3px] bg-[#6fb3e8]"></span></div>

    <!-- tray -->
    <div class="ml-auto flex items-center h-[50px] pr-[12px]">
      <svg class="w-[20px] h-[20px]" viewBox="0 0 20 20"><use href="#globe"/></svg>
      <svg class="w-[22px] h-[20px] ml-[11px]" viewBox="0 0 22 20" fill="none" stroke="#fff"><path d="M1 7h4l5-4v14l-5-4H1z"/><path d="M13 7c1.500 2 1.500 4 0 6M16 4c3 4 3 8 0 12"/></svg>
      <svg class="w-[20px] h-[20px] ml-[9px]" viewBox="0 0 20 20" fill="none" stroke="#bbb" stroke-width="1.200"><path d="M2 17C2 9 9 2 16 2M6 17c0-5 5-11 10-11M10 17c0-3 3-6 6-6"/><circle cx="14" cy="16" r="1.500" fill="#ddd" stroke="none"/></svg>
      <svg class="w-[22px] h-[18px] ml-[8px]" viewBox="0 0 22 18" fill="none" stroke="#fff" stroke-width="1.300"><rect x="3" y="4" width="17" height="9"/><path d="M1 4V1M5 4V1M3 13v3h8"/><rect x="5" y="6" width="7" height="5" fill="#fff" stroke="none"/></svg>
      <span class="ml-[8px] w-[20px] text-[16px] text-[#ddd] font-['Noto_Sans_CJK_SC',sans-serif]">中</span>
      <svg class="w-[20px] h-[20px] ml-[15px] rotate-[-12deg]" viewBox="0 0 20 20"><rect x="1" y="1" width="18" height="18" rx="3" fill="#f4632a"/><path d="M14 6c-3-2-8-1-8 2s8 1 8 4-6 3-9 1" fill="none" stroke="#fff" stroke-width="2.500"/></svg>
      <div class="flex flex-col items-end ml-[19px] w-[131px] text-[15px] leading-[24px] font-['Noto_Sans','Noto_Sans_CJK_SC',sans-serif]">
        <span class="pr-[48px] pt-[1px] text-[15.5px]">15:49</span>
        <span class="whitespace-nowrap text-[15.6px]">2023/12/22 星期五</span>
      </div>
    </div>
  </div>

  <!-- input method bar floating over the status bar -->
  <div class="absolute left-[1728px] top-[998px] flex items-center w-[185px] h-[32px] pl-[8px] gap-[8.5px] bg-white border border-[#cfe0f0] text-[#0a74d8]">
    <span class="w-[22px] text-center text-[18px] font-bold leading-none font-['Noto_Sans_CJK_SC',sans-serif]">中</span>
    <span class="w-[22px] text-center text-[15px] font-bold leading-none">°,</span>
    <svg class="w-[22px] h-[20px]" viewBox="0 0 22 20"><rect x="7" y="0" width="8" height="13" rx="4" fill="#0a74d8"/><path d="M4 8c0 9 14 9 14 0M11 15v4" fill="none" stroke="#0a74d8" stroke-width="1.500"/></svg>
    <svg class="w-[22px] h-[18px]" viewBox="0 0 22 18"><rect x="1" y="1" width="20" height="16" rx="2" fill="none" stroke="#0a74d8" stroke-width="2"/><path d="M4 5h14M4 9h14M7 13h8" stroke="#0a74d8" stroke-width="2" stroke-dasharray="2 1"/></svg>
    <svg class="w-[22px] h-[18px]" viewBox="0 0 22 18"><path d="M7 0L1 3l2 6 3-1v10h10V8l3 1 2-6-6-3c-1 2-7 2-8 0z" fill="#0a74d8"/></svg>
    <svg class="w-[18px] h-[18px]" viewBox="0 0 18 18"><rect width="8" height="8" rx="2" fill="#a88be0"/><rect x="10" width="8" height="8" rx="2" fill="#f09a6a"/><rect y="10" width="8" height="8" rx="2" fill="#e89ab0"/><rect x="10" y="10" width="8" height="8" rx="2" fill="#f47c3c"/></svg>
  </div>
  <svg class="absolute left-[1692px] top-[992px] w-[41px] h-[39px]" viewBox="0 0 41 39"><path d="M3 8L33 1l7 28-31 8z" fill="#f4632a"/><path d="M31 12C23 7 12 9 13 15c1 6 16 3 17 9 1 6-11 7-19 3" fill="none" stroke="#fff" stroke-width="5"/></svg>

  <!-- watermark -->
  <span class="absolute left-[1673px] top-[1046px] text-[19.9px] leading-[28px] whitespace-nowrap text-white/60">CSDN @weixin_43896802</span>
</div>
</body>
</html>
